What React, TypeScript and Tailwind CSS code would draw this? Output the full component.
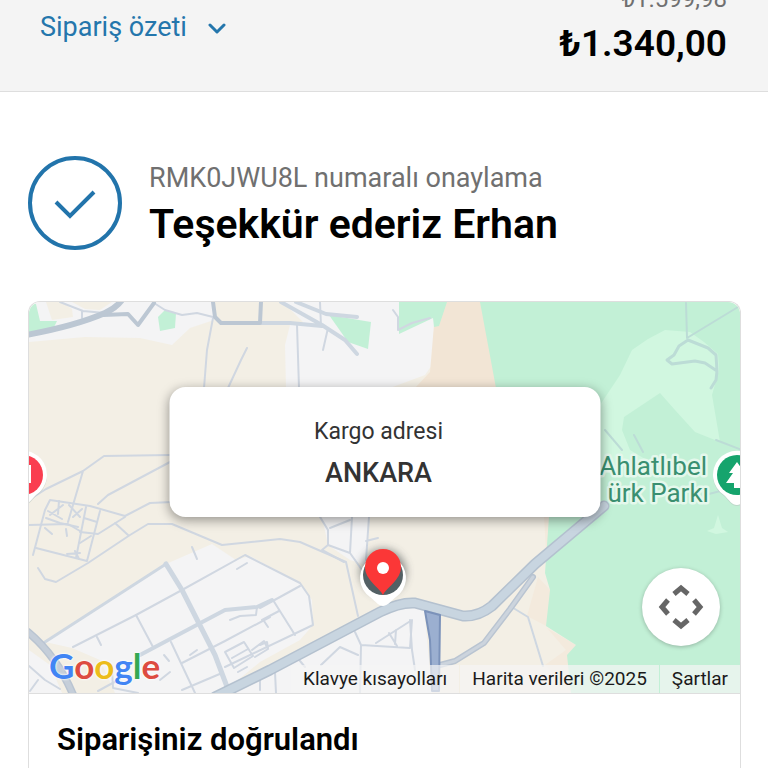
import type { ReactNode } from 'react'

const googleLetters = [
  { char: 'G', color: 'text-[#4285f4]' },
  { char: 'o', color: 'text-[#dd4b41]' },
  { char: 'o', color: 'text-[#ecbd1c]' },
  { char: 'g', color: 'text-[#4285f4]' },
  { char: 'l', color: 'text-[#34a853]' },
  { char: 'e', color: 'text-[#dd4b41]' },
]

const streets = [
  // north west
  'M60 302 L83 311 L105 313 M82 311 L82 318',
  'M154 303 L165 310 L182 315 L197 313 L213 317',
  'M213 318 L207 350 L204 388 M247 348 L241 360 L228 388',
  'M29 500 L46 489 L83 471 L104 456 L170 455 M83 471 L68 522 M98 504 L108 495 L170 462',
  // small quarter on the left
  'M29 525 L68 524 L80 531',
  'M33 555 L45 510 L50 500 L90 506 L125 516 L150 503 L172 502',
  'M36 548 L87 561 L100 511 M86 507 L76 558',
  'M38 568 L45 579 L56 582 L88 563 L130 535 L148 524 L172 524 L222 545 L280 539 L300 542 L346 562 L358 616',
  'M80 532 L98 534 L125 517 M115 523 L128 535 M84 518 L97 522 M80 543 L91 536',
  'M48 511 L62 519 M59 501 L58 514 M50 515 L63 505 M69 505 L80 517 M73 517 L82 509 M45 528 L52 534 M66 529 L67 536 M67 554 L80 553 M75 551 L79 559 M46 518 L60 523 L78 527',
  // south west
  'M192 547 L197 559 M237 569 L247 563',
  'M136 615 L153 647 M171 642 L195 693 M182 663 L225 641 L270 617',
  'M73 647 L136 615 L182 590 L245 555 L300 583 L309 596 L313 625 L225 667',
  'M230 620 L240 616 L256 615 L257 607 M97 637 L101 645 M29 666 L45 680 L60 689 M38 680 L30 691 M112 669 L113 688 L138 693',
  'M225 652 L244 642 L253 656 L234 668 Z M232 658 L248 649 M252 650 L264 641 L268 649 L255 657 M238 672 L247 667 M260 674 L260 690',
  'M160 680 L170 672 M120 679 L98 691 M164 655 L169 661 M190 655 L197 650 M182 690 L222 673',
  'M260 608 L300 586 M273 600 L295 635 M262 620 L279 611 M264 621 L268 627 M260 645 L267 642 L268 648',
  // centre
  'M320 517 L328 530 L328 545 L322 550 L344 562 M328 545 L350 553 L362 570 M352 517 L350 553 M369 517 L366 560 M330 528 L350 520 M366 541 L378 538',
  'M355 632 L361 645 L360 693 M361 645 L410 648 L412 620 L376 643 M389 633 L397 646 M396 630 L395 644',
  'M321 665 L340 647 L358 655 M410 620 L412 650 L415 670 M295 655 L305 667 M275 672 L276 693',
  // north
  'M297 325 L299 388 M328 328 L323 350 M320 302 L321 326 M393 310 L398 317 L398 330 L412 323 L430 318',
]

function Streets() {
  return (
    <g fill="none" strokeLinecap="round" strokeLinejoin="round">
      <g stroke="#d0d7e1" strokeWidth="2">
        {streets.map(d => <path key={d} d={d} />)}
      </g>
      <g stroke="#ced7e1" strokeWidth="4">
        <path d="M261 323 L290 323 L322 326 M281 302 L322 325 L345 340 L357 354" />
        <path d="M296 302 L326 314 L357 317" />
        <path d="M140 655 L225 610 L257 607 L272 600" />
        <path d="M45 642 L166 564" strokeWidth="3" />
        <path d="M166 564 L182 590 L215 655 L229 692" strokeWidth="5" />
        <path d="M510 606 L528 617 L543 666" strokeWidth="2" />
      </g>
      <g stroke="#bcc7d3" strokeWidth="4">
        <path d="M103 315 L128 314 L138 325 L154 303" />
        <path d="M213 302 L215 317 L221 323 L260 323 L261 302" />
      </g>
      <path d="M26 335 Q75 326 105 313 Q116 308 122 300" stroke="#bcc7d3" strokeWidth="6" />
      <path d="M28 632 Q58 657 74 697" stroke="#b9c4d1" strokeWidth="8" />
      <path d="M28 632 Q58 657 74 697" stroke="#c5ced9" strokeWidth="5" />
      {/* side road joining the boulevard */}
      <path d="M440 665 L455 661 L484 643 L510 609 L533 577" stroke="#b9c4d1" strokeWidth="6" />
      <path d="M440 665 L455 661 L484 643 L510 609 L533 577" stroke="#ccd4dd" strokeWidth="3" />
      {/* boulevard */}
      <path d="M215 697 L270 670 L380 612 Q400 602 415 603 L463 616 Q478 617 492 606 L535 564 L604 506" stroke="#b4c1cf" strokeWidth="11" />
      <path d="M215 697 L270 670 L380 612 Q400 602 415 603 L463 616 Q478 617 492 606 L535 564 L604 506" stroke="#c8d5e0" strokeWidth="8" />
      <path d="M425 611 L440 615 L439 691 L432 691 L430 640 Z" fill="#9bafd0" stroke="#7b92ba" strokeWidth="2" />
    </g>
  )
}

function MapPin({ x, color, children }: { x: number; color: string; children: ReactNode }) {
  return (
    <g transform={`translate(${x} 475)`}>
      <path d="M0 30 C-5 30 -8 25 -13 20 A24 24 0 1 1 13 20 C8 25 5 30 0 30Z" fill="#b9c6c2" opacity="0.6" transform="translate(0 1)" />
      <path d="M0 30 C-5 30 -8 25 -13 20 A24 24 0 1 1 13 20 C8 25 5 30 0 30Z" fill="#fff" />
      <circle r="20" fill={color} />
      {children}
    </g>
  )
}

function MapDrawing() {
  return (
    <svg className="absolute inset-0 h-full w-full" viewBox="29 302 711 391" preserveAspectRatio="xMidYMid slice" aria-hidden="true">
      <defs>
        <filter id="soft" x="-20%" y="-20%" width="140%" height="140%">
          <feGaussianBlur stdDeviation="4" />
        </filter>
      </defs>
      <rect x="-400" y="0" width="1600" height="1000" fill="#f3efe5" />

      {/* built-up areas */}
      <g fill="#f4f4f5">
        <path d="M29 302 H213 L214 320 L190 328 L172 345 L140 338 L85 337 L29 342 Z" />
        <path d="M283 302 H450 L434 330 L432 365 L425 375 L390 388 H286 L285 345 L290 325 L303 322 Z" />
        <path d="M45 642 L166 564 L212 544 L236 560 L250 556 L300 583 L312 600 L313 625 L300 640 L260 662 L222 693 H115 L100 660 L72 648 Z" />
        <path d="M222 693 L270 670 L400 603 L424 607 L432 693 Z" />
        <path d="M29 650 L50 665 L62 693 H29 Z" />
        <path d="M322 517 H370 L366 565 L350 560 L328 545 Z" />
      </g>
      <path d="M46 302 H62 L72 309 L73 317 L52 320 Z M72 302 H112 L100 310 L85 309 Z" fill="#f3efe5" />
      <path d="M29 337 L85 318 L105 313" fill="none" stroke="#f4f4f5" strokeWidth="4" />

      {/* dry land */}
      <path d="M446 302 H484 L500 388 H415 L430 372 L434 325 Z" fill="#f2e5d5" />
      <path d="M538 577 L550 590 V628 L527 616 Z M544 517 H552 V560 L546 550 Z M547 628 L576 645 L572 693 L545 665 L566 650 Z" fill="#f3eadd" />

      {/* parks */}
      <g fill="#c2f0d6">
        <path d="M480 302 H1200 V693 H571 L567 655 L576 645 L546 626 L550 590 L545 573 L549 517 L496 388 Z" />
        <path d="M29 302 L36 304 L40 321 L57 321 L54 327 L29 333 Z" />
        <path d="M158 317 L165 310 L176 313 L175 328 L160 331 Z" />
        <path d="M329 315 L371 322 L368 349 L348 342 Z" />
        <path d="M399 302 H447 L439 326 L434 327 L433 318 L399 334 Z" />
      </g>
      <path d="M600 405 L620 375 L632 350 L648 339 L665 330 L690 332 L704 342 L718 354 L719 370 L712 395 L720 442 L695 432 L675 410 L660 393 L645 403 L624 417 L622 430 L630 450 L650 462 L600 470 Z" fill="#d1f7e0" />
      <path d="M718 515 L722 528 L728 532 L716 534 L707 531 L714 528 Z" fill="#d1f7e0" />
      <g fill="none" stroke="#bcdcd6" strokeWidth="3" strokeLinecap="round" strokeLinejoin="round">
        <path d="M686 303 L687 338 L738 307" strokeWidth="2" />
        <path d="M688 340 L679 346 L674 355 L667 360 L672 364 L695 361 L705 363 L717 371 L716 355 L708 348 Z M717 371 L716 380 L711 388" />
        <path d="M605 430 L622 450 M634 435 L643 452 M716 440 L742 450 M705 495 L740 486" strokeWidth="2" />
      </g>

      <Streets />

      <g fontFamily="Roboto, sans-serif" fontSize="26" fill="#3a8f70" stroke="#e4f8ec" strokeWidth="5" strokeLinejoin="round" textAnchor="end" style={{ paintOrder: 'stroke' }}>
        <text x="707" y="475">Ahlatlıbel</text>
        <text x="709" y="502">ürk Parkı</text>
      </g>
      <MapPin x={737} color="#16a46d">
        <path d="M0 -13 L8 -2 H4 L11 8 H3 V13 H-3 V8 H-11 L-4 -2 H-8 Z" fill="#fff" />
      </MapPin>
      <MapPin x={23} color="#fa3e50">
        <path d="M-6 -10 H8 V8 H-6 Z" fill="#fff" />
      </MapPin>

      {/* delivery marker */}
      <circle cx="383" cy="572" r="23" fill="#3f4648" opacity="0.6" filter="url(#soft)" />
      <path d="M383 606 C379 606 376 602 370 597 A23 23 0 1 1 396 597 C390 602 387 606 383 606Z" fill="#fff" />
      <circle cx="383" cy="575" r="20" fill="#536064" />
      <path d="M383 595 C380 588 365 580 365 567 A18 18 0 1 1 401 567 C401 580 386 588 383 595Z" fill="#fb3737" />
      <circle cx="383" cy="568" r="6" fill="#fff" />
    </svg>
  )
}

function DeliveryMap() {
  return (
    <div className="relative h-[391px] overflow-hidden rounded-t-xl">
      <MapDrawing />

      <div className="absolute top-[85px] left-1/2 w-[431px] max-w-[90%] -translate-x-1/2 rounded-2xl bg-white pt-[29px] pr-3 pb-[27px] text-center text-[#333] shadow-[0_3px_12px_rgba(0,0,0,0.4)]">
        <p className="text-[23px] leading-8">Kargo adresi</p>
        <p className="mt-2 text-[27px] leading-[34px] font-medium">ANKARA</p>
      </div>

      <button type="button" aria-label="Harita kamera kontrolleri" className="absolute right-5 bottom-[47px] flex size-[78px] items-center justify-center rounded-full bg-white shadow-[0_1px_4px_rgba(0,0,0,0.25)]">
        <svg className="size-[46px]" viewBox="0 0 46 46" fill="none" stroke="#666" strokeWidth="5" aria-hidden="true">
          <path d="M16 10 L23 4 L30 10 M16 36 L23 42 L30 36 M10 16 L4 23 L10 30 M36 16 L42 23 L36 30" />
        </svg>
      </button>

      <a href="#google" aria-label="Google" className="absolute bottom-1.5 left-5 font-[Lato,sans-serif] text-[35px] leading-[44px] font-bold [text-shadow:0_0_2px_#fff,0_0_3px_#fff]">
        {googleLetters.map((letter, i) => (
          <span key={i} className={letter.color}>{letter.char}</span>
        ))}
      </a>

      <div className="absolute right-0 bottom-0 flex gap-px text-[19px] leading-7 text-[#1a1a1a]">
        <button type="button" className="bg-[#f5f5f5]/70 px-3">Klavye kısayolları</button>
        <span className="bg-[#f5f5f5]/70 px-3">Harita verileri ©2025</span>
        <a href="#sartlar" className="bg-[#f5f5f5]/70 px-3">Şartlar</a>
      </div>
    </div>
  )
}

export default function App() {
  return (
    <div className="overflow-hidden bg-white font-[Roboto,sans-serif] text-black">
      <header className="flex items-start justify-between border-b border-[#dedede] bg-[#f4f4f4] pr-[41px] pb-[23px] pl-10">
        <button type="button" className="mt-[11px] flex items-center gap-5 text-[27px] leading-8 text-[#2476ac]">
          Sipariş özeti
          <svg className="mt-1 h-3 w-5" viewBox="0 0 20 12" fill="none" stroke="currentColor" strokeWidth="3" strokeLinecap="round" strokeLinejoin="round" aria-hidden="true">
            <path d="M3 2 L10 9 L17 2" />
          </svg>
        </button>
        <div className="-mt-[15px] text-right">
          <s className="block text-[24px] leading-7 text-[#707070]">₺1.599,98</s>
          <strong className="mt-[7px] block text-[37px] leading-[48px] font-semibold">₺1.340,00</strong>
        </div>
      </header>

      <main className="pt-16 pr-[27px] pl-7">
        <div className="flex items-center gap-[27px]">
          <svg className="size-[94px] shrink-0" viewBox="0 0 94 94" fill="none" stroke="#2274ab" aria-hidden="true">
            <circle cx="47" cy="47" r="45" strokeWidth="4" />
            <path d="M28 46 L42 60 L66 36" strokeWidth="4" />
          </svg>
          <div className="pt-0.5">
            <p className="text-[27px] leading-9 text-[#707070]">RMK0JWU8L numaralı onaylama</p>
            <h1 className="mt-1 text-[41px] leading-[48px] font-semibold">Teşekkür ederiz Erhan</h1>
          </div>
        </div>

        <section className="mt-[51px] rounded-t-xl border border-b-0 border-[#dedede]">
          <DeliveryMap />
          <div className="border-t border-[#dedede] px-7 pt-7 pb-3">
            <h2 className="text-[31px] leading-9 font-semibold">Siparişiniz doğrulandı</h2>
          </div>
        </section>
      </main>
    </div>
  )
}
